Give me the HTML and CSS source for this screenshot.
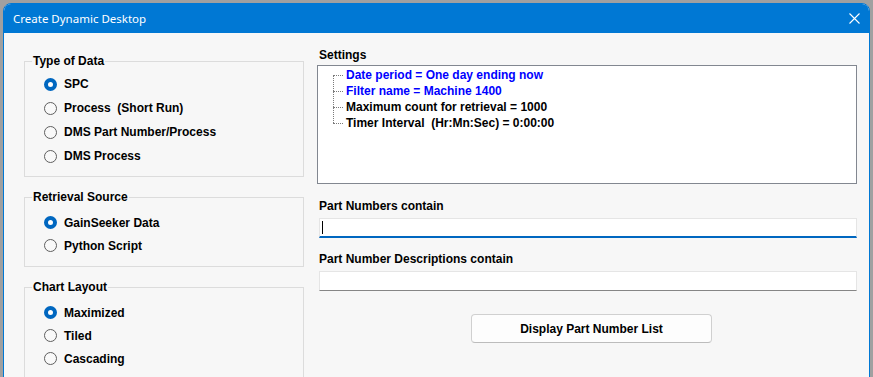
FILE: index.html
```html
<!DOCTYPE html>
<html lang="en">
<head>
  <meta charset="UTF-8">
  <meta name="viewport" content="width=device-width, initial-scale=1.0">
  <title>Create Dynamic Desktop</title>
  <link rel="stylesheet" href="styles.css">
</head>
<body>
  <div class="window">
    <div class="titlebar">
      <span class="title">Create Dynamic Desktop</span>
      <svg class="close" width="11" height="11" viewBox="0 0 11 11">
        <path d="M0.5 0.5 L10.5 10.5 M10.5 0.5 L0.5 10.5" stroke="#fff" stroke-width="1.1" fill="none"/>
      </svg>
    </div>
    <div class="content">
      <div class="left">
        <fieldset class="group first">
          <legend>Type of Data</legend>
          <div class="options">
            <label class="opt"><span class="radio on"></span>SPC</label>
            <label class="opt"><span class="radio"></span>Process&nbsp; (Short Run)</label>
            <label class="opt"><span class="radio"></span>DMS Part Number/Process</label>
            <label class="opt"><span class="radio"></span>DMS Process</label>
          </div>
        </fieldset>
        <fieldset class="group">
          <legend>Retrieval Source</legend>
          <div class="options">
            <label class="opt"><span class="radio on"></span>GainSeeker Data</label>
            <label class="opt"><span class="radio"></span>Python Script</label>
          </div>
        </fieldset>
        <fieldset class="group last">
          <legend>Chart Layout</legend>
          <div class="options">
            <label class="opt"><span class="radio on"></span>Maximized</label>
            <label class="opt"><span class="radio"></span>Tiled</label>
            <label class="opt"><span class="radio"></span>Cascading</label>
          </div>
        </fieldset>
      </div>
      <div class="right">
        <div class="label">Settings</div>
        <div class="tree">
          <ul>
            <li class="blue">Date period = One day ending now</li>
            <li class="blue">Filter name = Machine 1400</li>
            <li>Maximum count for retrieval = 1000</li>
            <li>Timer Interval&nbsp; (Hr:Mn:Sec) = 0:00:00</li>
          </ul>
        </div>
        <div class="label spaced">Part Numbers contain</div>
        <div class="textbox focused"><span class="caret"></span></div>
        <div class="label spaced second">Part Number Descriptions contain</div>
        <div class="textbox"></div>
        <button class="btn">Display Part Number List</button>
      </div>
    </div>
  </div>
</body>
</html>
```

FILE: styles.css
```css
* {
  margin: 0;
  padding: 0;
  box-sizing: border-box;
  list-style: none;
}

body {
  height: 377px;
  padding: 3px 3px 0;
  background: #a0a0a0;
  overflow: hidden;
  font-family: "Liberation Sans", Arial, sans-serif;
  font-size: 12px;
  font-weight: bold;
  color: #000;
}

.window {
  height: 400px;
  background: #f7f7f7;
  border: 1px solid #0078d4;
  border-radius: 8px 8px 0 0;
  overflow: hidden;
}

.titlebar {
  height: 30px;
  margin: -1px -1px 0;
  padding: 0 10px;
  background: #0078d4;
  display: flex;
  align-items: center;
  justify-content: space-between;
}

.title {
  font-family: "Noto Sans", sans-serif;
  font-weight: normal;
  font-size: 11.5px;
  color: #fff;
  padding-top: 1px;
}

.close {
  margin-top: 1px;
}

.content {
  display: flex;
  gap: 15px;
  padding-left: 20px;
}

.left {
  width: 280px;
  padding-top: 21px;
}

.group {
  margin: 13px 0 0;
  border: 1px solid #dcdcdc;
  padding: 0 0 9px 7px;
}

.group.first {
  margin-top: 0;
  padding-bottom: 8px;
}

.group.last {
  padding-bottom: 40px;
}

.group legend {
  padding: 0 1px;
  line-height: 14px;
}

.options {
  padding: 7px 0 0 12px;
}

.group.first .options {
  padding-top: 4px;
}

.opt {
  height: 23px;
  display: flex;
  align-items: center;
  gap: 7px;
}

.group.first .opt {
  height: 24px;
}

.radio {
  width: 13px;
  height: 13px;
  border-radius: 50%;
  border: 1px solid #5f5f5f;
  background: #f9f9f9;
  flex: none;
}

.radio.on {
  border: 4px solid #0067c0;
  background: #fff;
}

.right {
  width: 538px;
  padding-top: 15px;
  display: flex;
  flex-direction: column;
}

.label {
  line-height: 14px;
}

.label.spaced {
  margin-top: 15px;
}

.label.second {
  margin-top: 14px;
}

.label.spaced + .textbox {
  margin-top: 5px;
}

.tree {
  margin: 3px 0 0 -2px;
  height: 119px;
  border: 1px solid #828790;
  background: #fff;
  padding-top: 1px;
}

.tree ul {
  position: relative;
}

.tree ul::before {
  content: '';
  position: absolute;
  left: 15px;
  top: 8px;
  height: 48px;
  border-left: 1px dotted #7a7a7a;
}

.tree li {
  position: relative;
  padding-left: 28px;
  line-height: 16px;
}

.tree li::before {
  content: '';
  position: absolute;
  left: 15px;
  top: 8px;
  width: 10px;
  border-top: 1px dotted #7a7a7a;
}

.tree li.blue {
  color: #0000ff;
}

.textbox {
  height: 20px;
  background: #fff;
  border: 1px solid #e5e5e5;
  border-bottom-color: #868686;
  position: relative;
}

.textbox.focused {
  border-bottom: 2px solid #0067c0;
}

.caret {
  position: absolute;
  left: 2px;
  top: 2px;
  width: 1px;
  height: 13px;
  background: #000;
}

.btn {
  margin: 23px 0 0 152px;
  width: 241px;
  height: 29px;
  background: #fdfdfd;
  border: 1px solid #d0d0d0;
  border-bottom-color: #bcbcbc;
  border-radius: 4px;
  font-family: "Liberation Sans", Arial, sans-serif;
  font-size: 12px;
  font-weight: bold;
  color: #000;
}
```
